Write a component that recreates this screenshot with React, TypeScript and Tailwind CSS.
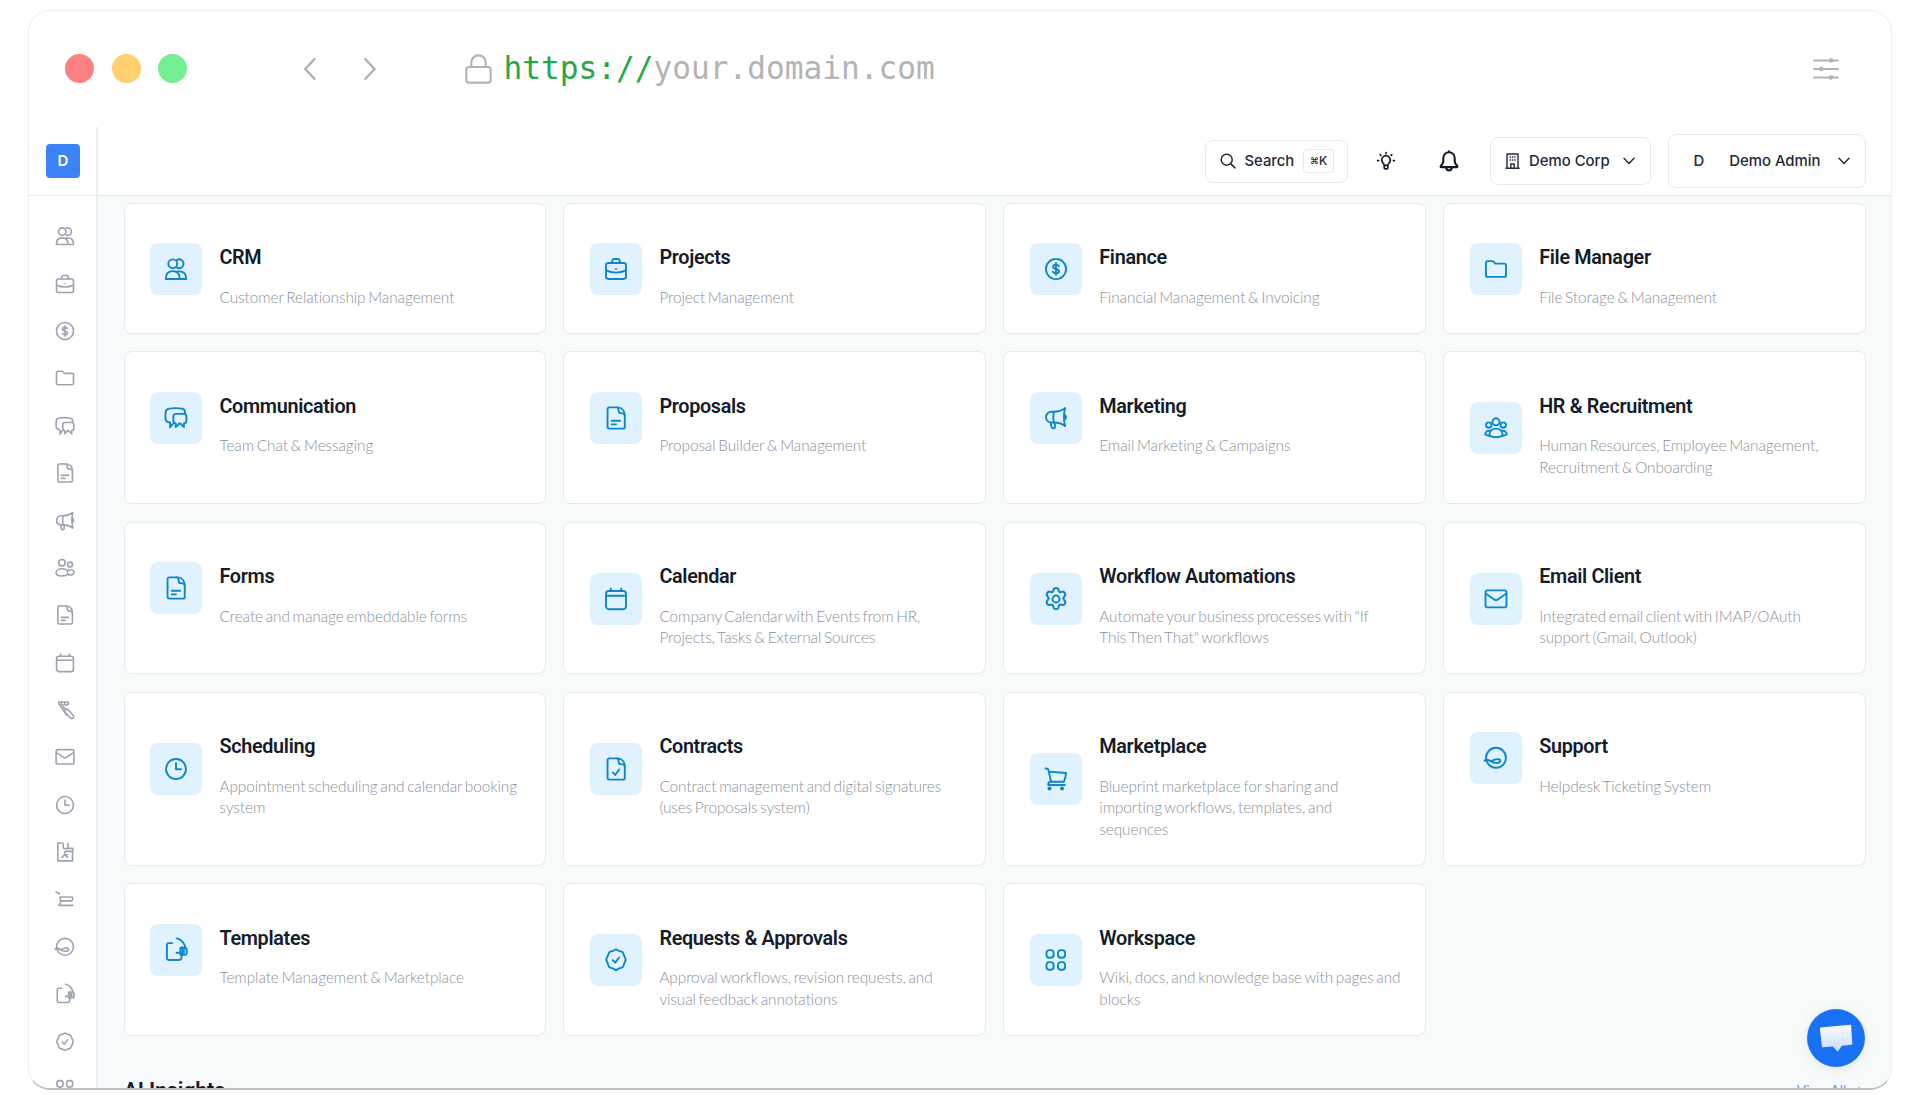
import type { ReactNode } from "react";

type IconName =
  | "contacts" | "briefcase" | "dollar" | "folder" | "chat" | "file" | "megaphone" | "team"
  | "people" | "calendar" | "gear" | "mail" | "clock" | "contract" | "cart" | "support"
  | "template" | "badge" | "grid" | "tool" | "fileBroken" | "cartBroken";

const shapes: Record<IconName, ReactNode> = {
  contacts: (
    <>
      <circle cx="9" cy="7.2" r="4.1" />
      <path d="M13 3.6a4.1 4.1 0 1 1 0 7.2M2.6 21.2c0-4.4 2.2-7.2 6.4-7.2s6.4 2.8 6.4 7.2zM13.6 14.2h1.6c4 0 6.2 2.6 6.2 7h-6" />
    </>
  ),
  briefcase: (
    <>
      <rect x="2.75" y="6.5" width="18.5" height="14.7" rx="2.2" />
      <path d="M8 6.3l.8-2.6c.2-.6.6-.9 1.200-.9h4c.6 0 1 .3 1.200.9l.8 2.600M2.900 13.300c2.800 1.300 5.800 2 9.100 2s6.300-.7 9.100-2M12 12v.01" />
    </>
  ),
  dollar: (
    <>
      <circle cx="12" cy="12" r="9.3" />
      <path d="M14.700 9.400c-.5-.9-1.500-1.400-2.700-1.400-1.500 0-2.700.7-2.700 1.900 0 2.900 5.500 1.200 5.500 4.200 0 1.200-1.300 1.900-2.800 1.900-1.300 0-2.300-.5-2.800-1.500M12 6.500v11" />
    </>
  ),
  folder: <path d="M2.700 6.500c0-1 .8-1.800 1.800-1.800h4.300c.5 0 .9.2 1.200.6L11.300 7h8.200c1 0 1.800.8 1.800 1.800v8.700c0 1-.8 1.800-1.800 1.800h-15c-1 0-1.800-.8-1.800-1.800z" />,
  chat: (
    <>
      <path d="M20.300 7.800V6.500c0-1.900-1.300-3-3-3.200-3.600-.5-7.600-.5-11.500 0C3.700 3.600 2.500 4.700 2.400 6.700c-.2 2.100-.2 4.200 0 6.300.2 2 1.500 2.900 4.100 3.200v4.400l3-3.600" />
      <path d="M12 8.200h7c1.700 0 2.600.9 2.600 2.500v3.800c0 1.600-.8 2.400-2.300 2.500v3.400l-3.300-3.300h-1l-3.300 3.300V17c-1.400-.2-2.100-1-2.100-2.500v-3.800c0-1.600.8-2.500 2.400-2.500z" />
    </>
  ),
  file: (
    <>
      <path d="M6 2.200h7.500c4 .2 6.600 3.300 6.600 7.600v10.400c0 1-.8 1.600-1.700 1.600H6c-1 0-1.800-.7-1.800-1.700V3.900c0-1 .8-1.700 1.800-1.700z" />
      <path d="M13.200 2.300c1.300.6 1.300 1.800 1.300 3.200 0 1.400.6 2 2 2 1.700 0 3 .3 3.500 1.800M8 14.600h7.800M8 17.900h4" />
    </>
  ),
  megaphone: (
    <>
      <path d="M20.300 3c-3.100 2.300-6.500 3.200-10.300 3.200H8.300C5 6.200 2.800 8.300 2.800 11.200s2.200 5 5.500 5H10c3.800 0 7.200.9 10.300 3.200" />
      <path d="M20.300 3c-1.200 5.200-1.200 11.200 0 16.400M20.300 9.300c1.300.8 1.300 3 0 3.800M10 6.200c-.8 3.300-.8 6.700 0 10M7 16.300l1 4.100c.3 1.500 3.200 1.300 3.200-.4l-.4-3.600" />
    </>
  ),
  people: (
    <>
      <circle cx="8.700" cy="6.200" r="3.500" />
      <circle cx="17.500" cy="8.300" r="2.700" />
      <path d="M8.700 12.800c3.800 0 6.300 2 6.300 4.500 0 2.200-2.300 3.500-6.300 3.500s-6.500-1.300-6.500-3.500c0-2.500 2.700-4.500 6.500-4.500zM14.500 15c.9-.8 2-1.100 3.300-1.100 2.400 0 4 1.200 4 3 0 1.900-2.400 2.900-6 2.600" />
    </>
  ),
  team: (
    <>
      <circle cx="12" cy="6.300" r="3.300" />
      <circle cx="5.300" cy="9.300" r="2.500" />
      <circle cx="18.700" cy="9.300" r="2.500" />
      <path d="M12 12.600c3.400 0 5.700 1.900 6.100 5.300.1 1.400-2.500 2.700-6.100 2.700s-6.200-1.300-6.100-2.700c.4-3.400 2.700-5.300 6.100-5.300zM6.800 14.600c-2.500-.5-4.300.7-4.800 3.200 1.200.9 2.600 1.500 4.500 1.700M17.200 14.600c2.500-.5 4.300.7 4.800 3.200-1.200.9-2.600 1.500-4.500 1.700" />
    </>
  ),
  calendar: (
    <>
      <rect x="2.800" y="4.600" width="18.400" height="16.800" rx="2.600" />
      <path d="M7.200 2.300v2.200M16.800 2.300v2.200M3 9h18" />
    </>
  ),
  gear: (
    <>
      <path d="M10 3.500c.5-1.600 3.500-1.600 4 0l.4 1.400c.2.600.9 1 1.500.8l1.500-.3c1.600-.3 3 2.200 2 3.500l-.9 1.200c-.4.500-.4 1.300 0 1.800l1 1.200c1 1.300-.5 3.800-2.100 3.500l-1.400-.3c-.7-.1-1.400.3-1.600.9l-.4 1.700c-.5 1.600-3.500 1.600-4 0l-.4-1.700c-.2-.6-.9-1-1.600-.9l-1.400.3c-1.600.3-3.100-2.200-2.100-3.500l1-1.200c.4-.5.4-1.300 0-1.800l-.9-1.200c-1-1.300.4-3.800 2-3.500l1.500.3c.6.200 1.300-.2 1.500-.8z" transform="translate(-1.200 -.7) scale(1.100)" />
      <circle cx="12" cy="12" r="3.200" />
    </>
  ),
  mail: (
    <>
      <rect x="2.300" y="4" width="19.400" height="15.700" rx="2" />
      <path d="M2.700 7.200l7.600 5.300c1.100.8 2.300.8 3.400 0l7.600-5.300" />
    </>
  ),
  clock: (
    <>
      <circle cx="12" cy="12" r="9.200" />
      <path d="M12 6.700v5.500h4.600" />
    </>
  ),
  contract: (
    <>
      <path d="M6 2.200h7.500c4 .2 6.600 3.300 6.600 7.600v10.400c0 1-.8 1.600-1.700 1.600H6c-1 0-1.800-.7-1.800-1.700V3.900c0-1 .8-1.700 1.800-1.700z" />
      <path d="M13.200 2.300c1.300.6 1.300 1.800 1.300 3.200 0 1.400.6 2 2 2 1.700 0 3 .3 3.500 1.800M9.300 15.300l2 2.200 3.600-5" />
    </>
  ),
  cart: (
    <>
      <path d="M2.200 2.300h1c1 0 1.600.5 1.800 1.400l2.500 11.100M5.500 5.200l15.800 1.300c-.2 2.800-.9 5.300-2 8.100H7.300c-1.600 0-2.500 1.200-2.500 3h15.300" />
      <circle cx="6" cy="20.800" r="1" />
      <circle cx="17.600" cy="20.800" r="1" />
    </>
  ),
  support: (
    <>
      <circle cx="12" cy="11.800" r="9.200" />
      <path d="M1.400 14.600c1-1.400 2.100-1.300 3.600-.5l2.300 1c2 .9 5 2.700 8 .7 1.200-.8.800-2.300-.6-2.600-2.600-.6-4.700.3-7.400 1.900-1.200-1.200-2.700-1.600-4.300-1.100" />
    </>
  ),
  template: (
    <>
      <path d="M8.300 5.700H5.600c-1.200 0-2 .8-2 2v11.500c0 1.200.8 2 2 2h9c1.500 0 2.300-.9 2.500-2.200l.6-3.600M12.700 1.300c4.100 1 7.200 4.600 8.400 9.400M12.500 14.600h3.800M16 10.200h4.300c.9 0 1.600.7 1.600 1.600v3c0 .9-.7 1.600-1.600 1.600H16z" />
      <path d="M17.700 9.200v6.600M19.400 12v2.600" />
    </>
  ),
  badge: (
    <>
      <path d="M9.700 3.400l1.300-.8c.6-.4 1.400-.4 2 0l1.300.8 2.600.8c1 .2 1.700.9 1.900 1.900l.7 2 1.100 2.200c.5.900.5 1.800 0 2.700l-1 2.200-.8 2.300c-.3 1-1 1.600-2 1.800l-2.500.7-1.300.9c-.6.4-1.400.4-2 0l-1.300-.9-2.500-.7c-1-.2-1.700-.8-2-1.800l-.8-2.300-1-2.200c-.5-.9-.5-1.800 0-2.700l1.100-2.200.7-2c.2-1 .9-1.700 1.900-1.900z" />
      <path d="M9 12.200l2.300 2.200 3.500-4.700" />
    </>
  ),
  grid: (
    <>
      <rect x="3.200" y="2.900" width="6.600" height="7" rx="2.700" />
      <rect x="13.800" y="2.900" width="6.600" height="7" rx="2.700" />
      <rect x="3.200" y="14" width="6.600" height="7" rx="2.700" />
      <rect x="13.800" y="14" width="6.600" height="7" rx="2.700" />
    </>
  ),
  tool: (
    <>
      <path d="M5.300 3.200h10.200v2.500c-1.200 1.300-3 1.300-3.900 0-1 1.200-2.500 1.200-3.400 0-.8.800-1.700.9-2.900 0zM8.200 3.400v2.200M11.700 3.400v2.200M6.200 6.300l7.500 11.200" />
      <path d="M12.600 11.800c1.400-.9 2.600-.4 3.700.8l4.600 5.300c.9 1 .8 2.100 0 2.800-.9.800-2 .6-2.900-.2l-5.700-5.600c-1-1-.9-2.300.3-3.100zM9.700 8.300l3 3.300" />
    </>
  ),
  fileBroken: (
    <>
      <path d="M8 2.200H4.200v19.500h16V12.300M10 2.200v4.300c0 1.200.7 1.800 2 1.800h3.300V2.600M15.300 8h5.300v3.300h-7.300c-1 0-1.900.7-1.900 1.700" />
      <path d="M8.600 17.800l3-3 3.300 3M11.600 14.800h3" />
    </>
  ),
  cartBroken: (
    <>
      <path d="M2.300 3.600h1.300c.9 0 1.400.4 1.700 1.200l.3.800M6.600 8.700h12.500c1.100 0 1.500.5 1.300 1.400l-.3 1.700c-.1.700-.6 1.100-1.300 1.100H7.400zM7.300 13v1.300l-2.100 3.600h15.300" />
    </>
  ),
};

function Icon({ name, className }: { name: IconName; className: string }) {
  return (
    <svg viewBox="0 0 24 24" className={className} fill="none" stroke="currentColor" strokeWidth="1.75" strokeLinecap="round" strokeLinejoin="round">
      {shapes[name]}
    </svg>
  );
}

const sidebar: IconName[] = [
  "contacts", "briefcase", "dollar", "folder", "chat", "file", "megaphone", "people", "file", "calendar",
  "tool", "mail", "clock", "fileBroken", "cartBroken", "support", "template", "badge", "grid",
];

const apps: { icon: IconName; title: string; lines: string[] }[] = [
  { icon: "contacts", title: "CRM", lines: ["Customer Relationship Management"] },
  { icon: "briefcase", title: "Projects", lines: ["Project Management"] },
  { icon: "dollar", title: "Finance", lines: ["Financial Management & Invoicing"] },
  { icon: "folder", title: "File Manager", lines: ["File Storage & Management"] },
  { icon: "chat", title: "Communication", lines: ["Team Chat & Messaging"] },
  { icon: "file", title: "Proposals", lines: ["Proposal Builder & Management"] },
  { icon: "megaphone", title: "Marketing", lines: ["Email Marketing & Campaigns"] },
  { icon: "team", title: "HR & Recruitment", lines: ["Human Resources, Employee Management,", "Recruitment & Onboarding"] },
  { icon: "file", title: "Forms", lines: ["Create and manage embeddable forms"] },
  { icon: "calendar", title: "Calendar", lines: ["Company Calendar with Events from HR,", "Projects, Tasks & External Sources"] },
  { icon: "gear", title: "Workflow Automations", lines: ["Automate your business processes with \"If", "This Then That\" workflows"] },
  { icon: "mail", title: "Email Client", lines: ["Integrated email client with IMAP/OAuth", "support (Gmail, Outlook)"] },
  { icon: "clock", title: "Scheduling", lines: ["Appointment scheduling and calendar booking", "system"] },
  { icon: "contract", title: "Contracts", lines: ["Contract management and digital signatures", "(uses Proposals system)"] },
  { icon: "cart", title: "Marketplace", lines: ["Blueprint marketplace for sharing and", "importing workflows, templates, and", "sequences"] },
  { icon: "support", title: "Support", lines: ["Helpdesk Ticketing System"] },
  { icon: "template", title: "Templates", lines: ["Template Management & Marketplace"] },
  { icon: "badge", title: "Requests & Approvals", lines: ["Approval workflows, revision requests, and", "visual feedback annotations"] },
  { icon: "grid", title: "Workspace", lines: ["Wiki, docs, and knowledge base with pages and", "blocks"] },
];

function AppCard({ icon, title, lines }: { icon: IconName; title: string; lines: string[] }) {
  return (
    <div className="rounded-lg border border-[#e6e9ed] bg-white">
      <div className="flex items-center pt-[26px] pb-[24.400px] pl-[25.500px]">
        <div className="flex size-[52px] shrink-0 items-center justify-center rounded-lg bg-[#e0f2fe] text-[#0d86cb]">
          <Icon name={icon} className="size-[26px]" />
        </div>
        <div className="ml-[17.500px] pt-[14.700px]">
          <h3 className="font-[Roboto] text-[19.800px] leading-[28px] font-semibold tracking-[-0.32px] whitespace-nowrap text-[#141b2b]">{title}</h3>
          <p className="mt-[14.400px] font-[Lato] text-[15.400px] leading-[21.450px] font-light tracking-[-0.08px] whitespace-nowrap text-[#8b909a] [word-spacing:-1.400px]">
            {lines.map((line) => (
              <span key={line} className="block">{line}</span>
            ))}
          </p>
        </div>
      </div>
    </div>
  );
}

function Chevron() {
  return (
    <svg viewBox="0 0 12 8" className="h-[8px] w-[12px]" fill="none" stroke="#1f2937" strokeWidth="1.4" strokeLinecap="round" strokeLinejoin="round">
      <path d="M1 1.200l5 5.300 5-5.300" />
    </svg>
  );
}

function BrowserBar() {
  return (
    <div className="flex h-[116px] shrink-0 items-center pb-px pl-[36px] text-[#b3b3b3]">
      <div className="flex gap-[17.500px]">
        <span className="size-[29px] rounded-full bg-[#ff8080]" />
        <span className="size-[29px] rounded-full bg-[#ffcf70]" />
        <span className="size-[29px] rounded-full bg-[#74ee92]" />
      </div>
      <svg viewBox="0 0 74 22" className="ml-[115.500px] h-[22px] w-[74px]" fill="none" stroke="currentColor" strokeWidth="2.400" strokeLinecap="round" strokeLinejoin="round">
        <path d="M11.500 1.200L2.200 11l9.300 9.800M62.300 1.200l9.300 9.800-9.300 9.800" />
      </svg>
      <svg viewBox="0 0 27 30" className="ml-[88px] h-[30px] w-[27px]" fill="none" stroke="currentColor" strokeWidth="2.200">
        <rect x="1.300" y="13" width="24.400" height="15.600" rx="2.500" />
        <path d="M6.300 13V8.600C6.300 4.500 9.200 1.400 13.500 1.400s7.200 3.100 7.200 7.200V13" />
      </svg>
      <div className="ml-[12px] pb-px font-['DejaVu_Sans_Mono'] text-[31.150px] leading-[36px]">
        <span className="text-[#28a745]">https://</span>
        <span>your.domain.com</span>
      </div>
      <svg viewBox="0 0 26 22" className="mr-[52.500px] ml-auto h-[22px] w-[26px]" fill="currentColor" stroke="currentColor" strokeWidth="2" strokeLinecap="round">
        <path d="M1 2.500h24M1 11h24M1 19.500h24" />
        <circle cx="18" cy="2.500" r="1.300" />
        <circle cx="8.200" cy="11" r="1.300" />
        <circle cx="18" cy="19.500" r="1.300" />
      </svg>
    </div>
  );
}

function TopBar() {
  return (
    <div className="flex h-[69px] shrink-0 items-center border-b border-[#e2e5e9] pr-[25.500px] font-[Inter] text-[14.900px] font-medium text-[#1f2937]">
      <div className="ml-auto flex h-[43px] w-[143px] items-center rounded-lg border border-[#e6e9ed] pl-[14px]">
        <svg viewBox="0 0 16 16" className="size-[16px]" fill="none" stroke="currentColor" strokeWidth="1.500" strokeLinecap="round">
          <circle cx="6.700" cy="6.700" r="5.500" />
          <path d="M10.900 10.900l4 4" />
        </svg>
        <span className="ml-[9px] text-[14.800px]">Search</span>
        <kbd className="ml-[9px] flex h-[24px] w-[31px] shrink-0 items-center justify-center rounded border border-[#e6e9ed] font-[Inter]">
          <span className="text-[9px]">⌘</span>
          <span className="text-[12px]">K</span>
        </kbd>
      </div>
      <svg viewBox="0 0 20 20" className="ml-[28px] size-[20px]" fill="none" stroke="#111827" strokeWidth="1.700" strokeLinecap="round" strokeLinejoin="round">
        <path d="M8.200 14.300c0-1-.5-1.500-1.200-2.200a4.300 4.300 0 1 1 6 0c-.7.700-1.200 1.200-1.200 2.200zM8.200 14.500v2.300c0 .6.400 1 1 1h1.600c.6 0 1-.4 1-1v-2.300M10 1.600v.8M4.200 3.700l.6.600M15.800 3.700l-.6.600M1.600 9.600h1M17.400 9.600h1" />
      </svg>
      <svg viewBox="0 0 22 22" className="ml-[42px] size-[22px]" fill="none" stroke="#111827" strokeWidth="2.100" strokeLinecap="round" strokeLinejoin="round">
        <path d="M11 1.200v1M11 2.200a5.700 5.700 0 0 0-5.700 5.700v3.400c0 1-.3 1.700-.9 2.500l-1.700 2.300c-.3.400 0 1 .5 1h15.600c.5 0 .8-.6.5-1l-1.700-2.300c-.6-.8-.9-1.500-.9-2.500V7.900A5.700 5.700 0 0 0 11 2.200zM8.200 17.400c.1 2 1.100 3.100 2.800 3.100s2.700-1.100 2.800-3.100" />
      </svg>
      <div className="ml-[30px] flex h-[47.500px] w-[161px] items-center rounded-lg border border-[#e6e9ed] pl-[14px]">
        <svg viewBox="0 0 15 16" className="h-[16px] w-[15px]" fill="none" stroke="currentColor" strokeWidth="1.400" strokeLinejoin="round">
          <path d="M.5 15.200h14M2 15V1h11v14M5.800 15v-4h3.400v4" />
          <path d="M4.500 4h1.400M6.900 4h1.300M9.200 4h1.400M4.500 7h1.400M6.900 7h1.300M9.200 7h1.400" />
        </svg>
        <span className="ml-[9.500px] whitespace-nowrap">Demo Corp</span>
        <span className="mr-[15px] ml-auto"><Chevron /></span>
      </div>
      <div className="ml-[17.500px] flex h-[54px] w-[197.500px] items-center rounded-lg border border-[#e6e9ed] pl-[24.500px]">
        <span>D</span>
        <span className="ml-[25px] whitespace-nowrap">Demo Admin</span>
        <span className="mr-[15px] ml-auto"><Chevron /></span>
      </div>
    </div>
  );
}

export default function App() {
  return (
    <div className="h-[1100px] w-[1920px] overflow-hidden bg-white px-[28px] pt-[10px]">
      <div className="relative flex h-[1080px] w-[1864px] flex-col overflow-hidden rounded-[22px] border border-b-2 border-[#eceeef] border-b-[#bdbfc0] bg-white">
        <BrowserBar />
        <div className="flex min-h-0 flex-1">
          <aside className="flex w-[69px] shrink-0 flex-col border-r-2 border-[#eceef2]">
            <div className="flex h-[69px] shrink-0 items-center justify-center border-b border-[#e2e5e9]">
              <div className="ml-px flex size-[34.500px] items-center justify-center rounded bg-[#3b82f6] font-[Inter] text-[15px] font-semibold text-white">D</div>
            </div>
            <nav className="flex flex-col items-center pt-[16.500px] pl-[5px] text-[#9ca3af]">
              {sidebar.map((name, i) => (
                <div key={i} className="flex h-[47.400px] shrink-0 items-center">
                  <Icon name={name} className="size-[22px]" />
                </div>
              ))}
            </nav>
          </aside>
          <div className="flex min-w-0 flex-1 flex-col">
            <TopBar />
            <main className="flex-1 overflow-hidden bg-[#f7fafb] pt-[6.700px] pr-[25.500px] pl-[25.500px]">
              <div className="grid grid-cols-4 gap-x-[17.600px] gap-y-[17.800px]">
                {apps.map((app) => (
                  <AppCard key={app.title} {...app} />
                ))}
              </div>
              <div className="mt-[40px] flex items-start justify-between">
                <h2 className="font-[Roboto] text-[21.500px] leading-[30px] font-semibold tracking-[-0.15px] text-[#141b2b]">AI Insights</h2>
                <span className="mr-[2px] pt-[4px] font-[Lato] text-[13.800px] leading-[20px] text-[#5b9cf5]">View All →</span>
              </div>
            </main>
          </div>
        </div>
        <button className="absolute right-[26px] bottom-[21px] flex size-[58px] items-center justify-center rounded-full bg-[#1972f5] shadow-[0_2px_14px_rgba(0,0,0,0.08)]">
          <svg viewBox="0 0 34 28" className="h-[28px] w-[34px]">
            <defs>
              <linearGradient id="bubble" x1="0" y1="0" x2="0" y2="1">
                <stop offset="0" stopColor="#ffffff" />
                <stop offset="1" stopColor="#c4dafc" />
              </linearGradient>
            </defs>
            <path d="M1.800 3.600L31 .8c.7 0 1 .3 1.100.9l1.200 18c0 .7-.3 1-.9 1.100l-9.600.9-4.100 6-5-5.200-9.700.8c-.7 0-1-.3-1.100-.9L.9 4.700c0-.7.300-1 .9-1.100z" fill="url(#bubble)" />
          </svg>
        </button>
      </div>
    </div>
  );
}
